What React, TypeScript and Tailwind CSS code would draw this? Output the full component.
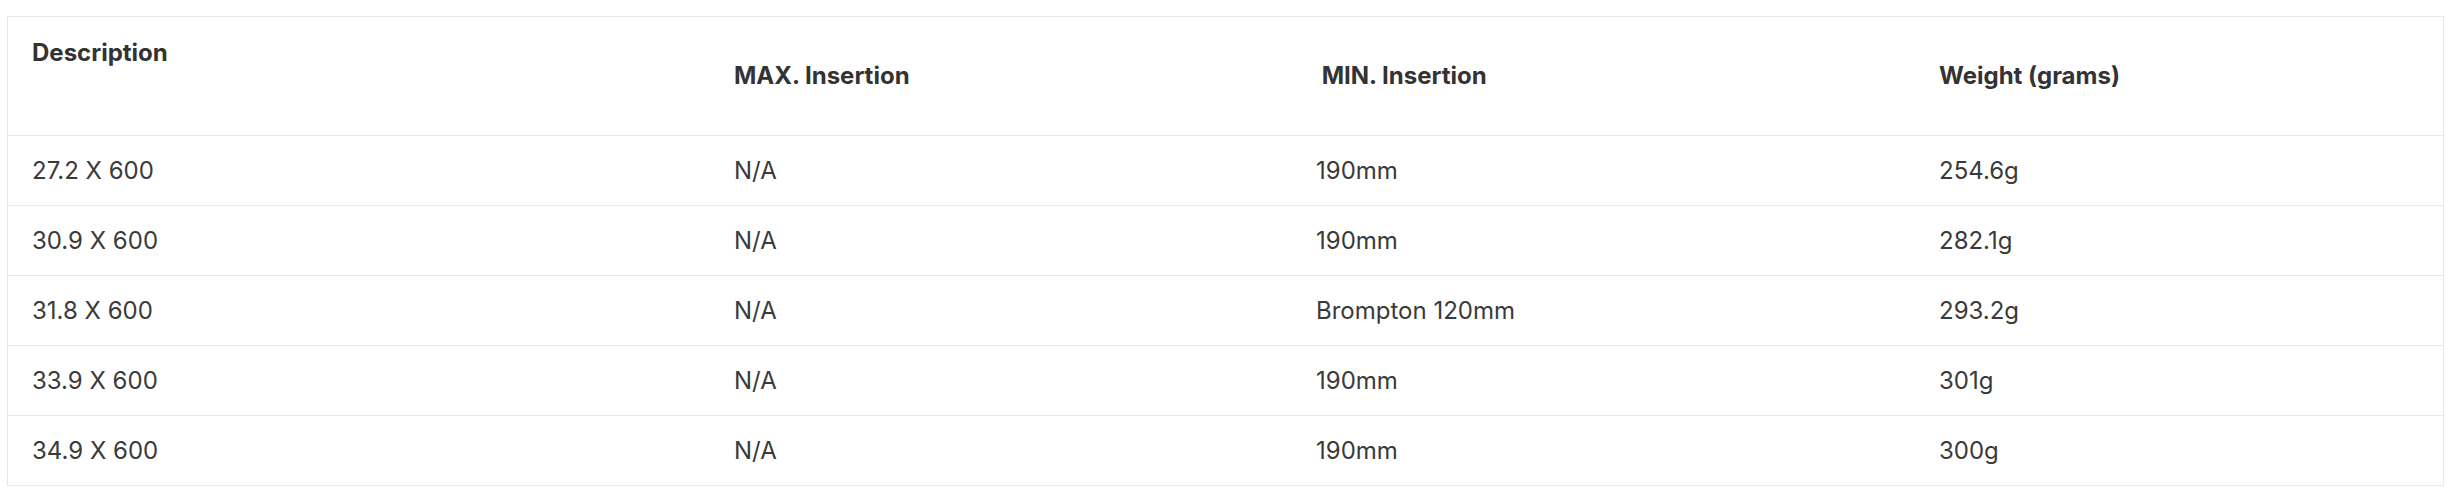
const rows = [
  { desc: "27.2 X 600", max: "N/A", min: "190mm", weight: "254.6g" },
  { desc: "30.9 X 600", max: "N/A", min: "190mm", weight: "282.1g" },
  { desc: "31.8 X 600", max: "N/A", min: "Brompton 120mm", weight: "293.2g" },
  { desc: "33.9 X 600", max: "N/A", min: "190mm", weight: "301g" },
  { desc: "34.9 X 600", max: "N/A", min: "190mm", weight: "300g" },
]

export default function App() {
  return (
    <div className="bg-white min-h-[500px] pt-4 pl-[7px] font-['Inter',sans-serif]">
      <table className="w-[2437px] table-fixed border-separate border-spacing-0 border border-[#e8e8e8] text-left">
        <colgroup>
          <col className="w-[702px]" />
          <col className="w-[582px]" />
          <col className="w-[623px]" />
          <col />
        </colgroup>
        <thead>
          <tr className="text-[24px] font-bold text-[#333333]">
            <th className="h-[118px] align-top px-6 pt-[18px] font-bold">Description</th>
            <th className="h-[118px] px-6 font-bold">MAX. Insertion</th>
            <th className="h-[118px] px-6 font-bold">&nbsp;MIN. Insertion</th>
            <th className="h-[118px] px-6 font-bold">Weight (grams)</th>
          </tr>
        </thead>
        <tbody>
          {rows.map((row) => (
            <tr key={row.desc} className="text-[24px] text-[#3a3a3a]">
              <td className="h-[70px] border-t border-[#e8e8e8] px-6">{row.desc}</td>
              <td className="h-[70px] border-t border-[#e8e8e8] px-6">{row.max}</td>
              <td className="h-[70px] border-t border-[#e8e8e8] px-6">{row.min}</td>
              <td className="h-[70px] border-t border-[#e8e8e8] px-6">{row.weight}</td>
            </tr>
          ))}
        </tbody>
      </table>
    </div>
  )
}
